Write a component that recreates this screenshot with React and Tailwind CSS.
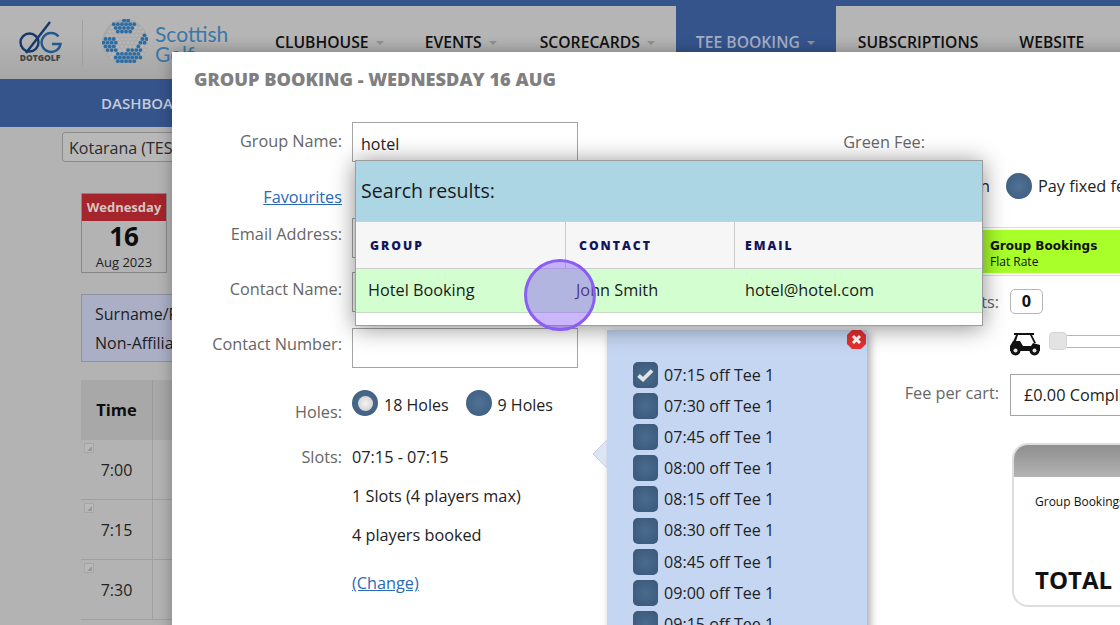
import React from "react";

const navItems = [
  { label: "CLUBHOUSE", caret: true, pad: "pl-[20px] pr-[21px]" },
  { label: "EVENTS", caret: true, pad: "pl-[20px] pr-[23px]" },
  { label: "SCORECARDS", caret: true, pad: "pl-[20px] pr-[21px]" },
  { label: "TEE BOOKING", caret: true, active: true, pad: "pl-[20px] pr-[21px]" },
  { label: "SUBSCRIPTIONS", pad: "pl-[22px] pr-[21px]" },
  { label: "WEBSITE", pad: "pl-[20px] pr-[21px]" },
];

const timeRows = ["7:00", "7:15", "7:30"];

const slotTimes = ["07:15", "07:30", "07:45", "08:00", "08:15", "08:30", "08:45", "09:00", "09:15"];

const globeDots = [];
for (let row = 0; row < 12; row++) {
  for (let col = 0; col < 12; col++) {
    const x = 1.5 + col * 4.1 + (row % 2 ? 2.05 : 0);
    const y = 1.5 + row * 3.7;
    if (Math.hypot(x - 23, y - 23) > 22) continue;
    const top = y < 15 && Math.abs(x - 23) < 16 - y * 0.7;
    const right = x > 36 && y > 10 && y < 25 && x > 48 - (y - 10);
    const left = x < 14 && y > 18 && y < 32;
    const bottom = y > 27 && x > 10 && x < 40 && y > 27 + (36 - x) * 0.35;
    const blue = top || right || left || bottom;
    globeDots.push({ x, y, blue });
  }
}

function Logos() {
  return (
    <div className="flex w-[255px] shrink-0 items-start">
      <div className="ml-[18px] mt-[15px] w-[44px]">
        <svg className="ml-px" width="44" height="33" viewBox="0 0 44 33" fill="none">
          <circle cx="10.5" cy="21.5" r="9" stroke="#17386a" strokeWidth="2.4" />
          <path d="M7 32 L31 1" stroke="#17386a" strokeWidth="2.4" />
          <path d="M39.5 15.5 A9.5 9.5 0 1 0 41.5 23 L33 23" stroke="#24588f" strokeWidth="2.4" />
        </svg>
        <div className="mt-[-1px] text-center text-[8.5px] leading-[10px] font-extrabold text-[#444444]">DOTGOLF</div>
      </div>
      <div className="ml-[20px] mt-[14px] h-[46px] w-px bg-[#a0a0a0]" />
      <svg className="ml-[19px] mt-[13px] shrink-0" width="46" height="46" viewBox="0 0 46 46">
        <circle cx="23" cy="23" r="23" fill="#a9a9a9" />
        {globeDots.map((d, i) => (
          <circle key={i} cx={d.x} cy={d.y} r={d.blue ? 1.9 : 1.6} fill={d.blue ? "#2a6ca6" : "#b5b5b5"} />
        ))}
      </svg>
      <div className="ml-[7px] mt-[18px] font-['Lato',sans-serif] text-[21px] leading-[20px] text-[#3a78a8]">
        Scottish
        <br />
        Golf
      </div>
    </div>
  );
}

function TopNav() {
  return (
    <div className="flex h-[73px] bg-linear-to-b from-[#b5b5b5] from-40% to-[#a6a6a6]">
      <Logos />
      {navItems.map((item) => (
        <div
          key={item.label}
          className={
            item.active
              ? `mt-[-6px] flex items-start bg-[#35548c] pt-[34px] text-[#a4afc6] ${item.pad}`
              : `flex items-start pt-[28px] text-[#111111] ${item.pad}`
          }
        >
          <span className="text-[15.7px] leading-[17px] font-semibold whitespace-nowrap">{item.label}</span>
          {item.caret && (
            <span className="mt-[7px] ml-[7px] h-0 w-0 border-x-[4px] border-t-[4px] border-x-transparent border-t-[#8f8f8f]" />
          )}
        </div>
      ))}
    </div>
  );
}

function PageBehind() {
  return (
    <div className="h-full">
      <div className="h-[6px] bg-[#35548c]" />
      <TopNav />
      <div className="flex h-[48px] items-center bg-[#35548c] pl-[101px] text-[15px] font-semibold text-[#c3cbdb]">
        DASHBOARD
      </div>
      <div className="ml-[62px] mt-[5px] h-[30px] w-[300px] rounded-[3px] border border-[#8a8a8a] bg-[#b8b8b8] pl-[6px] pt-px text-[16px] leading-[28px] text-[#2b2b2b]">
        Kotarana (TEST)
      </div>
      <div className="ml-[81px] mt-[31px] h-[80px] w-[86px] border border-[#868686] text-center">
        <div className="h-[27px] bg-[#a4252b] text-[13px] leading-[27px] font-bold text-[#d9c3c3]">Wednesday</div>
        <div className="text-[26px] leading-[31px] font-bold text-[#0d0d0d]">16</div>
        <div className="text-[13px] leading-[21px] text-[#222222]">Aug 2023</div>
      </div>
      <div className="ml-[81px] mt-[21px] h-[68px] w-[300px] border border-[#8c8f9f] bg-[#abafc6] pl-[13px] pt-[5px] text-[16px] leading-[29px] text-[#1d1d1d] whitespace-nowrap">
        <div>Surname/First name</div>
        <div>Non-Affiliated</div>
      </div>
      <div className="ml-[81px] mt-[18px] w-[300px]">
        <div className="flex h-[60px] bg-[#a8a8a8]">
          <div className="w-[72px] border-r border-[#9a9a9a] text-center text-[16.5px] leading-[60px] font-bold text-[#0d0d0d]">Time</div>
        </div>
        {timeRows.map((time) => (
          <div key={time} className="flex h-[60px] border-b border-[#9f9f9f]">
            <div className="relative w-[72px] border-r border-[#9f9f9f] pt-[18px] text-center text-[16px] leading-[24px] text-[#222222]">
              <svg className="absolute left-[3px] top-[3px]" width="10" height="10" viewBox="0 0 10 10">
                <path d="M0.5 0.5 H9.5 V9.5 H0.5 Z" fill="#b9b9b9" stroke="#a6a6a6" />
                <path d="M3 8 L8 8 L8 3 Z" fill="#989898" />
              </svg>
              {time}
            </div>
          </div>
        ))}
      </div>
    </div>
  );
}

function FormRow({ label, className, labelClass, children }) {
  return (
    <div className={`flex ${className}`}>
      <div className={`w-[170px] text-right text-[16.25px] leading-[24px] text-[#666666] ${labelClass}`}>{label}</div>
      <div className="ml-[10px]">{children}</div>
    </div>
  );
}

function TextBox({ value }) {
  return (
    <div className="h-[40px] w-[226px] border border-[#a5a5a5] bg-white pl-[8px] pt-[9px] text-[16px] leading-[24px] text-[#222222]">
      {value}
    </div>
  );
}

function Radio({ selected }) {
  return (
    <span className="flex h-[26px] w-[26px] shrink-0 items-center justify-center rounded-full bg-[radial-gradient(circle,#4f7296_0%,#3c5b7c_100%)]">
      {selected && <span className="h-[15px] w-[15px] rounded-full bg-[radial-gradient(circle,#f4f4f4_0%,#c9c9c9_100%)]" />}
    </span>
  );
}

function LeftForm() {
  return (
    <div className="w-[406px] shrink-0">
      <FormRow label="Group Name:" labelClass="pt-[7px]">
        <TextBox value="hotel" />
      </FormRow>
      <div className="mt-[23px] w-[170px] text-right text-[16.25px] leading-[24px] text-[#2a69b8] underline">Favourites</div>
      <FormRow label="Email Address:" className="mt-[9px]" labelClass="pt-[4px]">
        <TextBox />
      </FormRow>
      <FormRow label="Contact Name:" className="mt-[14px]" labelClass="pt-[5px]">
        <TextBox />
      </FormRow>
      <FormRow label="Contact Number:" className="mt-[16px]" labelClass="pt-[4px]">
        <TextBox />
      </FormRow>
      <FormRow label="Holes:" className="mt-[21px]" labelClass="pt-[11px]">
        <div className="flex items-center text-[16px] leading-[24px] text-[#222222]">
          <Radio selected />
          <span className="ml-[6px] mt-[4px]">18 Holes</span>
          <span className="ml-[17px]"><Radio /></span>
          <span className="ml-[6px] mt-[4px]">9 Holes</span>
        </div>
      </FormRow>
      <FormRow label="Slots:" className="mt-[21px]">
        <div className="text-[16.25px] leading-[24px] text-[#222222] whitespace-nowrap">
          <div>07:15 - 07:15</div>
          <div className="mt-[15px]">1 Slots (4 players max)</div>
          <div className="mt-[15px]">4 players booked</div>
          <div className="mt-[24px] text-[#2a69b8] underline">(Change)</div>
        </div>
      </FormRow>
    </div>
  );
}

function GolfCart() {
  return (
    <svg className="shrink-0" width="32" height="24" viewBox="0 0 32 24">
      <path d="M5 1 H25 V3 H5 Z" fill="#111111" />
      <path d="M7 3 L3 12 H6 L9 3 Z" fill="#111111" />
      <path d="M23 3 L27 11 H25 L21 3 Z" fill="#111111" />
      <path d="M1 14 L4 9 H11 L14 14 H22 L24 11 L31 13 V19 H1 Z" fill="#111111" />
      <circle cx="6.5" cy="18.5" r="5" fill="#111111" />
      <circle cx="6.5" cy="18.5" r="2" fill="#e6e6e6" />
      <circle cx="25.5" cy="18.5" r="5" fill="#111111" />
      <circle cx="25.5" cy="18.5" r="2" fill="#e6e6e6" />
    </svg>
  );
}

function RightForm() {
  return (
    <div className="ml-[29px] w-[513px] shrink-0 text-[16.25px] leading-[24px]">
      <div className="mt-[8px] w-[318px] text-right text-[#666666]">Green Fee:</div>
      <div className="ml-[300px] mt-[19px] flex items-center whitespace-nowrap text-[#222222]">
        <span className="w-[76px]">Per person</span>
        <span className="ml-[23px]"><Radio /></span>
        <span className="ml-[6px]">Pay fixed fee</span>
      </div>
      <div className="ml-[273px] mt-[28px] w-[300px] border-y border-[#dddddd] py-[2px]">
        <div className="h-[43px] bg-[#a9ff2a] pl-[110px] pt-[8px] text-[#111111]">
          <div className="font-['DejaVu_Sans',sans-serif] text-[12px] leading-[16px] font-bold">Group Bookings</div>
          <div className="text-[12px] leading-[16px]">Flat Rate</div>
        </div>
      </div>
      <div className="mt-[13px] flex">
        <div className="w-[392px] shrink-0 pt-[1px] text-right text-[#666666]">Carts:</div>
        <div className="ml-[11px] h-[25px] w-[33px] shrink-0 rounded-[5px] border border-[#b5b5b5] text-center leading-[23px] font-bold text-[#111111]">0</div>
      </div>
      <div className="ml-[402px] mt-[18px] flex items-start">
        <GolfCart />
        <div className="ml-[8px] flex items-center">
          <span className="h-[18px] w-[18px] shrink-0 rounded-[4px] bg-[#e3e3e3] border border-[#d5d5d5]" />
          <span className="h-[13px] w-[120px] shrink-0 border-y border-[#b5b5b5]" />
        </div>
      </div>
      <div className="mt-[18px] flex">
        <div className="w-[392px] shrink-0 pt-[7px] text-right text-[#666666]">Fee per cart:</div>
        <div className="ml-[11px] h-[42px] w-[200px] shrink-0 border border-[#a5a5a5] pl-[13px] pt-[8px] whitespace-nowrap text-[#222222]">
          £0.00 Complimentary
        </div>
      </div>
      <div className="ml-[405px] mt-[27px] h-[164px] w-[200px] overflow-hidden rounded-[16px] border-2 border-[#dddddd] text-[#111111]">
        <div className="h-[32px] bg-linear-to-b from-[#8f8f8f] to-[#b3b3b3]" />
        <div className="pl-[21px] pt-[16px] text-[12px] leading-[18px] whitespace-nowrap">Group Bookings</div>
        <div className="pl-[21px] pt-[54px] text-[24px] leading-[30px] font-bold">TOTAL</div>
      </div>
    </div>
  );
}

function SlotPicker() {
  return (
    <div className="absolute left-[435px] top-[278px] h-[340px] w-[260px] bg-[#c5d6f3] pl-[26px] pt-[29px] shadow-[3px_3px_8px_rgba(0,0,0,0.35)]">
      <svg className="absolute left-[-14px] top-[110px]" width="14" height="28" viewBox="0 0 14 28">
        <path d="M14 0 L0 14 L14 28 Z" fill="#dbe5f5" stroke="#c9d0dc" />
      </svg>
      <svg className="absolute right-[1px] top-[0px]" width="19" height="19" viewBox="0 0 19 19">
        <path d="M5 0 H14 L19 5 V14 L14 19 H5 L0 14 V5 Z" fill="#e4302f" />
        <path d="M6 6 L13 13 M13 6 L6 13" stroke="#ffffff" strokeWidth="3" />
      </svg>
      {slotTimes.map((time, i) => (
        <div key={time} className="flex h-[31.2px] items-center text-[16.1px] text-[#222222] whitespace-nowrap">
          <span className="flex h-[26px] w-[25px] shrink-0 items-center justify-center rounded-[5px] bg-[radial-gradient(circle,#4a6b8e_0%,#3a5878_100%)]">
            {i === 0 && (
              <svg width="19" height="16" viewBox="0 0 19 16">
                <path d="M2.5 8.5 L7 12.5 L16 3.5" fill="none" stroke="#e4e4e4" strokeWidth="3.8" />
              </svg>
            )}
          </span>
          <span className="ml-[6px]">{time} off Tee 1</span>
        </div>
      ))}
    </div>
  );
}

function SearchResults() {
  return (
    <div className="absolute left-[355px] top-[160px] z-10 h-[166px] w-[628px] border border-[#9c9c9c] bg-white shadow-[0_2px_22px_rgba(0,0,0,0.45)]">
      <div className="h-[60px] bg-[#add6e4] pl-[5px] pt-[16px] text-[19.6px] leading-[27px] text-[#1a1a1a]">Search results:</div>
      <div className="flex h-[48px] border-y border-[#cfcfcf] bg-[#f6f6f6] font-['Open_Sans',sans-serif] text-[12.2px] leading-[47px] font-extrabold tracking-[2px] text-[#14145c]">
        <div className="w-[210px] border-r border-[#c9c9c9] pl-[14px]">GROUP</div>
        <div className="w-[169px] border-r border-[#c9c9c9] pl-[13px]">CONTACT</div>
        <div className="pl-[10px]">EMAIL</div>
      </div>
      <div className="flex h-[44px] border-t border-b border-t-[#d3ffd0] border-b-[#c9d9c6] bg-[#d3ffd0] text-[16.25px] leading-[41px] text-[#1a1a1a]">
        <div className="w-[210px] pl-[12px]">Hotel Booking</div>
        <div className="w-[169px] pl-[10px]">John Smith</div>
        <div className="pl-[10px]">hotel@hotel.com</div>
      </div>
    </div>
  );
}

function BookingModal() {
  return (
    <div className="absolute left-[172px] top-[52px] h-[600px] w-[1000px] overflow-hidden bg-white shadow-[0_0_14px_rgba(0,0,0,0.3)]">
      <div className="pl-[22px] pt-[15px] text-[18.2px] leading-[25px] font-extrabold text-[#808080]">
        GROUP BOOKING - WEDNESDAY 16 AUG
      </div>
      <div className="mt-[30px] flex items-start">
        <LeftForm />
        <RightForm />
      </div>
      <SlotPicker />
    </div>
  );
}

export default function App() {
  return (
    <div className="relative h-[625px] w-[1120px] overflow-hidden bg-[#b3b3b3] font-['Open_Sans',sans-serif]">
      <PageBehind />
      <BookingModal />
      <SearchResults />
      <div className="absolute left-[524px] top-[259px] z-20 h-[72px] w-[72px] rounded-full border-[3px] border-[#8b5cf6] bg-[#8b5cf6]/45" />
    </div>
  );
}
